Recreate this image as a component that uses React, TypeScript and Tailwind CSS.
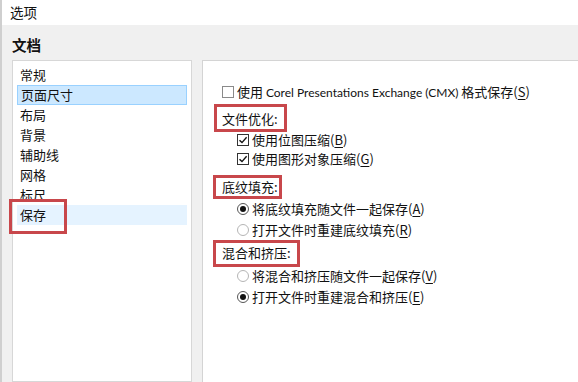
import React from 'react';

const font = { fontFamily: '"Noto Sans CJK SC", "Noto Sans", sans-serif' };
const latin = { fontFamily: 'Lato, "Noto Sans CJK SC", sans-serif' };

const navItems = ['常规', '页面尺寸', '布局', '背景', '辅助线', '网格', '标尺', '保存'];

const Key: React.FC<{ k: string }> = ({ k }) => (
  <span>
    (<span className="underline underline-offset-2">{k}</span>)
  </span>
);

const CheckBox: React.FC<{ checked?: boolean }> = ({ checked }) => (
  <span
    className={`w-[12px] h-[12px] border bg-white flex items-center justify-center shrink-0 ${
      checked ? 'border-[#333]' : 'border-[#8a8a8a]'
    }`}
  >
    {checked && (
      <svg width="10" height="10" viewBox="0 0 10 10">
        <path d="M1.5 5.2 L4 7.6 L8.6 2.2" fill="none" stroke="#111" strokeWidth="1.4" />
      </svg>
    )}
  </span>
);

const Radio: React.FC<{ on?: boolean }> = ({ on }) => (
  <span
    className={`w-[12px] h-[12px] rounded-full border bg-white flex items-center justify-center shrink-0 ${
      on ? 'border-[#555]' : 'border-[#b5b5b5]'
    }`}
  >
    {on && <span className="w-[6px] h-[6px] rounded-full bg-[#111]" />}
  </span>
);

const RedBox: React.FC<{ className: string }> = ({ className }) => (
  <span className={`absolute border-[3px] border-[#c8474b] pointer-events-none ${className}`} />
);

const App: React.FC = () => {
  return (
    <div className="w-[578px] h-[382px] bg-[#f0f0f0] border-l-2 border-[#cfcfcf] flex flex-col text-[13px] text-[#111] overflow-hidden" style={font}>
      <div className="h-[25px] bg-white pl-[8px] flex items-center text-[13.5px]">选项</div>

      <div className="h-[35px] pl-[10px] pt-[10px] font-bold text-[14.5px] leading-[20px]">文档</div>

      <div className="flex flex-1 min-h-0">
        <div className="ml-[10px] w-[180px] bg-white border border-[#d7d7d7] pt-[4px]">
          {navItems.map((item, i) => (
            <div
              key={item}
              className={`relative ml-[4px] mr-[4px] h-[20px] pl-[3px] flex items-center ${
                i === 1 ? 'bg-[#cce8ff] border border-[#99d1ff]' : i === 7 ? 'bg-[#e5f3ff]' : ''
              }`}
            >
              {item}
              {i === 7 && <RedBox className="left-[-8px] top-[-6px] w-[58px] h-[35px]" />}
            </div>
          ))}
        </div>

        <div className="ml-[10px] flex-1 bg-white border-l border-t border-[#d4d4d4] pl-[19px] pt-[24px]">
          <div className="flex items-center gap-[3px] h-[14px]">
            <CheckBox />
            <span>
              使用 <span className="text-[12px]" style={latin}>Corel Presentations Exchange (CMX)</span> 格式保存<Key k="S" />
            </span>
          </div>

          <div className="relative mt-[10px] h-[20px] flex items-center">
            <span>文件优化:</span>
            <RedBox className="left-[-8px] top-[-5px] w-[73px] h-[28px]" />
          </div>
          <div className="ml-[15px] mt-[1px] flex flex-col">
            <div className="flex items-center gap-[3px] h-[19px]">
              <CheckBox checked />
              <span>
                使用位图压缩<Key k="B" />
              </span>
            </div>
            <div className="flex items-center gap-[3px] h-[19px]">
              <CheckBox checked />
              <span>
                使用图形对象压缩<Key k="G" />
              </span>
            </div>
          </div>

          <div className="relative mt-[9px] h-[20px] flex items-center">
            <span>底纹填充:</span>
            <RedBox className="left-[-9px] top-[-2px] w-[69px] h-[24px]" />
          </div>
          <div className="ml-[15px] mt-[1px] flex flex-col">
            <div className="flex items-center gap-[3px] h-[21px]">
              <Radio on />
              <span>
                将底纹填充随文件一起保存<Key k="A" />
              </span>
            </div>
            <div className="flex items-center gap-[3px] h-[21px]">
              <Radio />
              <span>
                打开文件时重建底纹填充<Key k="R" />
              </span>
            </div>
          </div>

          <div className="relative mt-[3px] h-[20px] flex items-center">
            <span>混合和挤压:</span>
            <RedBox className="left-[-9px] top-[-3px] w-[87px] h-[27px]" />
          </div>
          <div className="ml-[15px] mt-[2px] flex flex-col">
            <div className="flex items-center gap-[3px] h-[21px]">
              <Radio />
              <span>
                将混合和挤压随文件一起保存<Key k="V" />
              </span>
            </div>
            <div className="flex items-center gap-[3px] h-[21px]">
              <Radio on />
              <span>
                打开文件时重建混合和挤压<Key k="E" />
              </span>
            </div>
          </div>
        </div>
      </div>
    </div>
  );
};

export default App;
